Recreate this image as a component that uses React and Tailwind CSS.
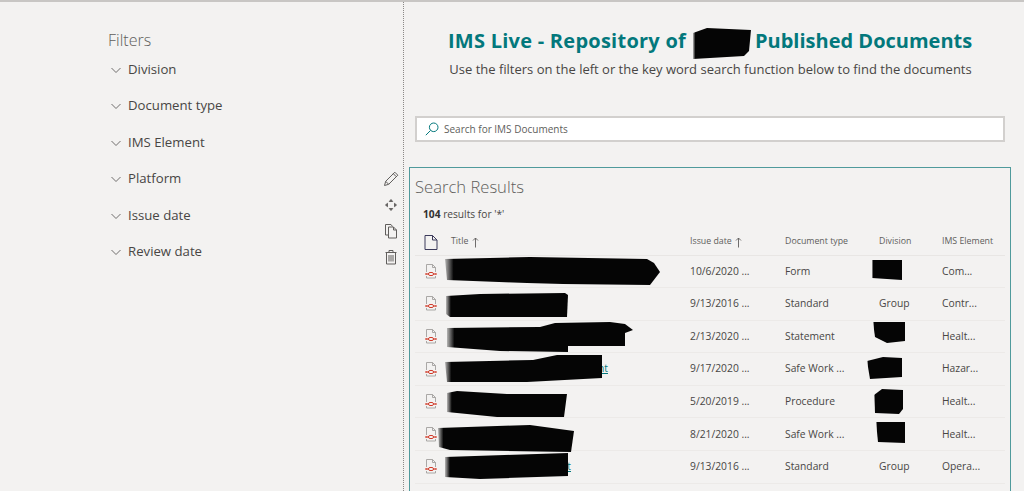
const FILTERS = ["Division", "Document type", "IMS Element", "Platform", "Issue date", "Review date"];

const ROWS = [
  { date: "10/6/2020 ...", type: "Form", division: "", ims: "Com..." },
  { date: "9/13/2016 ...", type: "Standard", division: "Group", ims: "Contr..." },
  { date: "2/13/2020 ...", type: "Statement", division: "", ims: "Healt..." },
  { date: "9/17/2020 ...", type: "Safe Work ...", division: "", ims: "Hazar...", tail: "nt", tailWidth: "w-[157px]" },
  { date: "5/20/2019 ...", type: "Procedure", division: "", ims: "Healt..." },
  { date: "8/21/2020 ...", type: "Safe Work ...", division: "", ims: "Healt..." },
  { date: "9/13/2016 ...", type: "Standard", division: "Group", ims: "Opera...", tail: "t", tailWidth: "w-[120px]" },
];

const BLOTS = [
  "693,33 707,28 751,30 749,51 744,56 693,59",
  "445,259 530,257 647,259 654,263 660,272 650,285 563,284 527,283 447,280",
  "446,296 480,294 565,293 568,295 567,317 450,317 446,314",
  "447,328 540,327 555,323 610,322 625,324 633,330 625,333 625,346 568,346 568,352 500,351 447,347",
  "445,362 533,360 557,355 602,355 602,378 527,382 447,382",
  "447,393 457,391 507,394 567,394 564,417 497,417 447,412",
  "438,428 530,425 574,431 571,452 450,450 439,447",
  "445,457 568,453 568,476 480,479 445,477",
  "872,260 902,260 902,280 872,278",
  "873,322 905,322 905,341 887,343 875,337",
  "867,361 883,357 902,358 902,377 870,379",
  "874,395 882,389 903,390 903,409 899,414 875,413",
  "876,422 905,422 905,443 878,442",
];

function Chevron() {
  return (
    <svg width="12" height="12" viewBox="0 0 12 12" fill="none" stroke="#605e5c" strokeWidth="0.9">
      <path d="M1.5 4 L6 8.5 L10.5 4" />
    </svg>
  );
}

function PdfIcon() {
  return (
    <svg width="12" height="15" viewBox="0 0 12 15" fill="none">
      <path d="M1.5 8 V0.5 H7.5 L10.5 3.5 V8 M7.5 0.5 V3.5 H10.5 M1.5 12 V14 H10.5 V12" stroke="#a19f9d" strokeWidth="0.9" />
      <path d="M0.3 10 H2.8 M9.2 10 H11.7" stroke="#d13b2a" strokeWidth="1.3" />
      <ellipse cx="6" cy="10" rx="2.7" ry="1.6" stroke="#d13b2a" strokeWidth="1" />
    </svg>
  );
}

function DocIcon() {
  return (
    <svg width="14" height="15" viewBox="0 0 14 15" fill="none" stroke="#3b3a5a" strokeWidth="1">
      <path d="M1 0.5 H8.5 L13 5 V14.5 H1 Z M8.5 0.5 V5 H13" />
    </svg>
  );
}

function SortArrow() {
  return (
    <svg width="7" height="11" viewBox="0 0 7 11" fill="none" stroke="#605e5c" strokeWidth="0.9">
      <path d="M3.5 10.5 V1 M1 3.5 L3.5 1 L6 3.5" />
    </svg>
  );
}

function Toolbar() {
  return (
    <div className="absolute right-0 top-[165px] flex h-[104px] w-[30px] flex-col items-start gap-[10px] bg-[#f3f2f1] pl-[10px] pt-[4px]">
      <svg width="16" height="16" viewBox="0 0 16 16" fill="none" stroke="#605e5c" strokeWidth="1">
        <path d="M1.5 14.5 L2.7 10.3 L11.8 1.2 L14.8 4.2 L5.7 13.3 Z M2.7 10.3 L5.7 13.3 M10.3 2.7 L13.3 5.7" />
      </svg>
      <svg width="16" height="16" viewBox="0 0 16 16" fill="#605e5c" stroke="#605e5c" strokeWidth="0.9">
        <path d="M8 2.5 L9.7 4.5 H6.3 Z M8 13.5 L6.3 11.5 H9.7 Z M2.5 8 L4.5 6.3 V9.7 Z M13.5 8 L11.5 9.7 V6.3 Z" />
      </svg>
      <svg width="16" height="16" viewBox="0 0 16 16" fill="none" stroke="#605e5c" strokeWidth="1">
        <path d="M5 12 H2.5 V1.5 H8 L9.5 3.5 M5.5 4 H10.5 L13.5 7 V15 H5.5 Z M10.5 4 V7 H13.5" />
      </svg>
      <svg width="16" height="16" viewBox="0 0 16 16" fill="none" stroke="#605e5c" strokeWidth="1">
        <path d="M3.5 3.5 H12.5 V15 H3.5 Z M2.5 3.5 H13.5 M6 3.5 V1.5 H10 V3.5 M6 6 V12.5 M8 6 V12.5 M10 6 V12.5" />
      </svg>
    </div>
  );
}

export default function App() {
  return (
    <div className="relative h-[491px] w-[1024px] overflow-hidden border-t-2 border-[#c8c6c4] bg-[#f3f2f1] font-['Open_Sans','Liberation_Sans',sans-serif] text-[#323130]">
      <div className="flex h-full">
        <aside className="relative w-[404px] shrink-0 border-r border-dotted border-[#8a8886] pl-[108px] pt-[26px]">
          <h2 className="text-[16px] leading-[24px] font-light text-[#605e5c]">Filters</h2>
          <ul className="mt-[6.5px] flex flex-col gap-[14.5px] pl-[2px]">
            {FILTERS.map((name) => (
              <li key={name} className="flex h-[22px] items-center gap-[6px] text-[13.2px] text-[#484644]">
                <Chevron />
                <span>{name}</span>
              </li>
            ))}
          </ul>
          <Toolbar />
        </aside>

        <main className="min-w-0 flex-1 pl-[5px] pr-[13px]">
          <header className="pt-[25px]">
            <h1 className="flex gap-[67px] pl-[39px] text-[20px] leading-[28px] font-bold whitespace-nowrap text-[#03787c]">
              <span className="w-[240px] tracking-[0.25px]">IMS Live - Repository of</span>
              <span>Published Documents</span>
            </h1>
            <p className="mt-[4px] pl-[1px] text-center text-[13px] leading-[20px] text-[#484644]">
              Use the filters on the left or the key word search function below to find the documents
            </p>
          </header>

          <div className="mt-[37px] ml-[6px] mr-[6px] flex h-[26px] items-center gap-[5px] border-2 border-[#d2d0ce] bg-white pl-[8px]">
            <svg width="14" height="14" viewBox="0 0 14 14" fill="none" stroke="#03787c" strokeWidth="1">
              <circle cx="8.7" cy="5.3" r="4.3" />
              <path d="M5.6 8.4 L0.8 13.2" />
            </svg>
            <span className="text-[10px] text-[#605e5c]">Search for IMS Documents</span>
          </div>

          <section className="mt-[25px] h-[340px] border border-[#4f9a9c] px-[5px]">
            <h2 className="pt-[6px] text-[16.6px] leading-[26px] font-light text-[#605e5c]">Search Results</h2>
            <p className="mt-[7px] pl-[8px] text-[10.2px] leading-[14px] text-[#484644]">
              <strong className="font-bold text-[#323130]">104</strong> results for '*'
            </p>

            <div className="mt-[8.5px] grid h-[26px] grid-cols-[36px_239px_95px_94px_63px_1fr] items-center border-b border-[#e8e6e4] text-[8.8px] text-[#605e5c]">
              <span className="pl-[9px]"><DocIcon /></span>
              <span className="flex items-center gap-[4px]">Title <SortArrow /></span>
              <span className="flex items-center gap-[3px]">Issue date <SortArrow /></span>
              <span>Document type</span>
              <span>Division</span>
              <span>IMS Element</span>
            </div>

            {ROWS.map((row, i) => (
              <div
                key={i}
                className="grid h-[32.6px] grid-cols-[36px_239px_95px_94px_63px_1fr] items-center border-b border-[#eceae8] text-[10.3px] text-[#484644]"
              >
                <span className="pl-[10px]"><PdfIcon /></span>
                <span className="min-w-0">
                  {row.tail && (
                    <a className={`${row.tailWidth} block text-right text-[#03787c] underline`}>{row.tail}</a>
                  )}
                </span>
                <span>{row.date}</span>
                <span>{row.type}</span>
                <span>{row.division}</span>
                <span>{row.ims}</span>
              </div>
            ))}
          </section>
        </main>
      </div>

      <svg className="pointer-events-none absolute left-0 top-[-2px] blur-[0.6px]" width="1024" height="491" viewBox="0 0 1024 491">
        <defs>
          <linearGradient id="ink" x1="0" y1="0" x2="1" y2="0">
            <stop offset="0" stopColor="#050505" stopOpacity="0.25" />
            <stop offset="0.04" stopColor="#050505" stopOpacity="1" />
          </linearGradient>
        </defs>
        {BLOTS.map((points) => (
          <polygon key={points} points={points} fill="url(#ink)" />
        ))}
      </svg>
    </div>
  );
}
